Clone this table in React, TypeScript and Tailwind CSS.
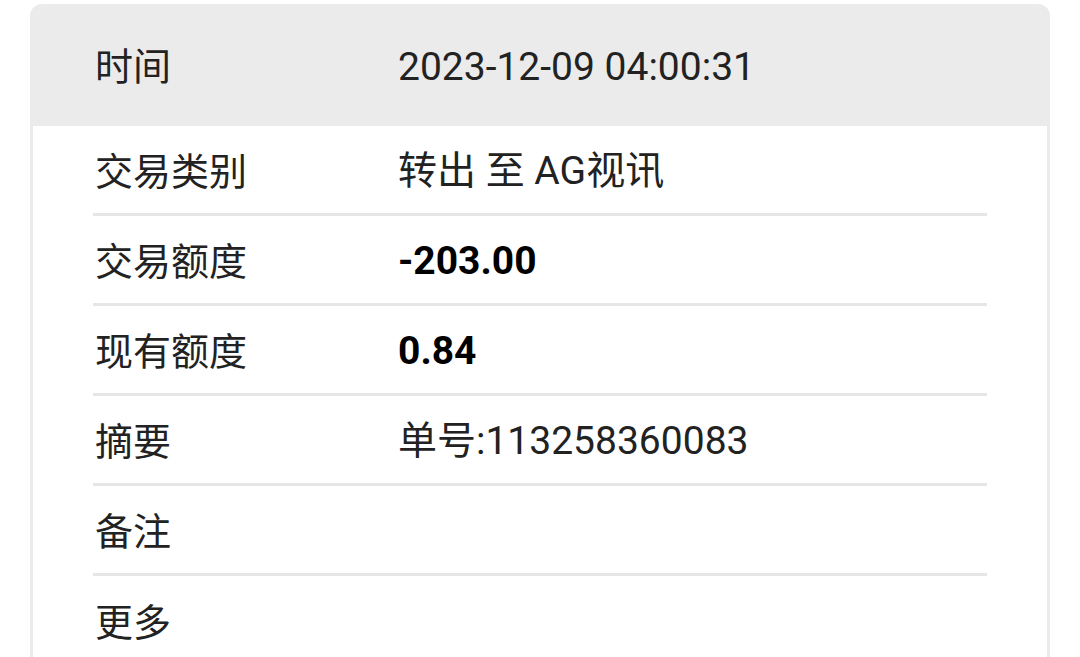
const rows: { label: string; value?: string; bold?: boolean }[] = [
  { label: '交易类别', value: '转出 至 AG视讯' },
  { label: '交易额度', value: '-203.00', bold: true },
  { label: '现有额度', value: '0.84', bold: true },
  { label: '摘要', value: '单号:113258360083' },
  { label: '备注' },
  { label: '更多' },
];

export default function App() {
  return (
    <div
      className="min-h-[657px] bg-white pt-[4px] px-[30px] overflow-hidden text-[#222222]"
      style={{ fontFamily: 'Roboto, "Noto Sans CJK SC", sans-serif' }}
    >
      <div className="rounded-t-[12px] overflow-hidden">
        <div className="h-[122px] bg-[#ebebeb] flex items-center text-[38px] leading-none pt-[4px]">
          <div className="w-[368px] pl-[65px]">时间</div>
          <div className="text-[39px]">2023-12-09 04:00:31</div>
        </div>
        <div className="border-x-[3px] border-[#ebebeb] bg-white px-[60px]">
          {rows.map((r, i) => (
            <div
              key={r.label}
              className={
                'h-[90px] flex items-center text-[38px] leading-none pt-[4px] ' +
                (i < rows.length - 1 ? 'border-b-[3px] border-[#e6e6e6]' : '')
              }
            >
              <div className="w-[305px] pl-[2px]">{r.label}</div>
              {r.value && (
                <div className={'text-[39px] ' + (r.bold ? 'font-bold text-black' : '')}>
                  {r.value}
                </div>
              )}
            </div>
          ))}
        </div>
      </div>
    </div>
  );
}
